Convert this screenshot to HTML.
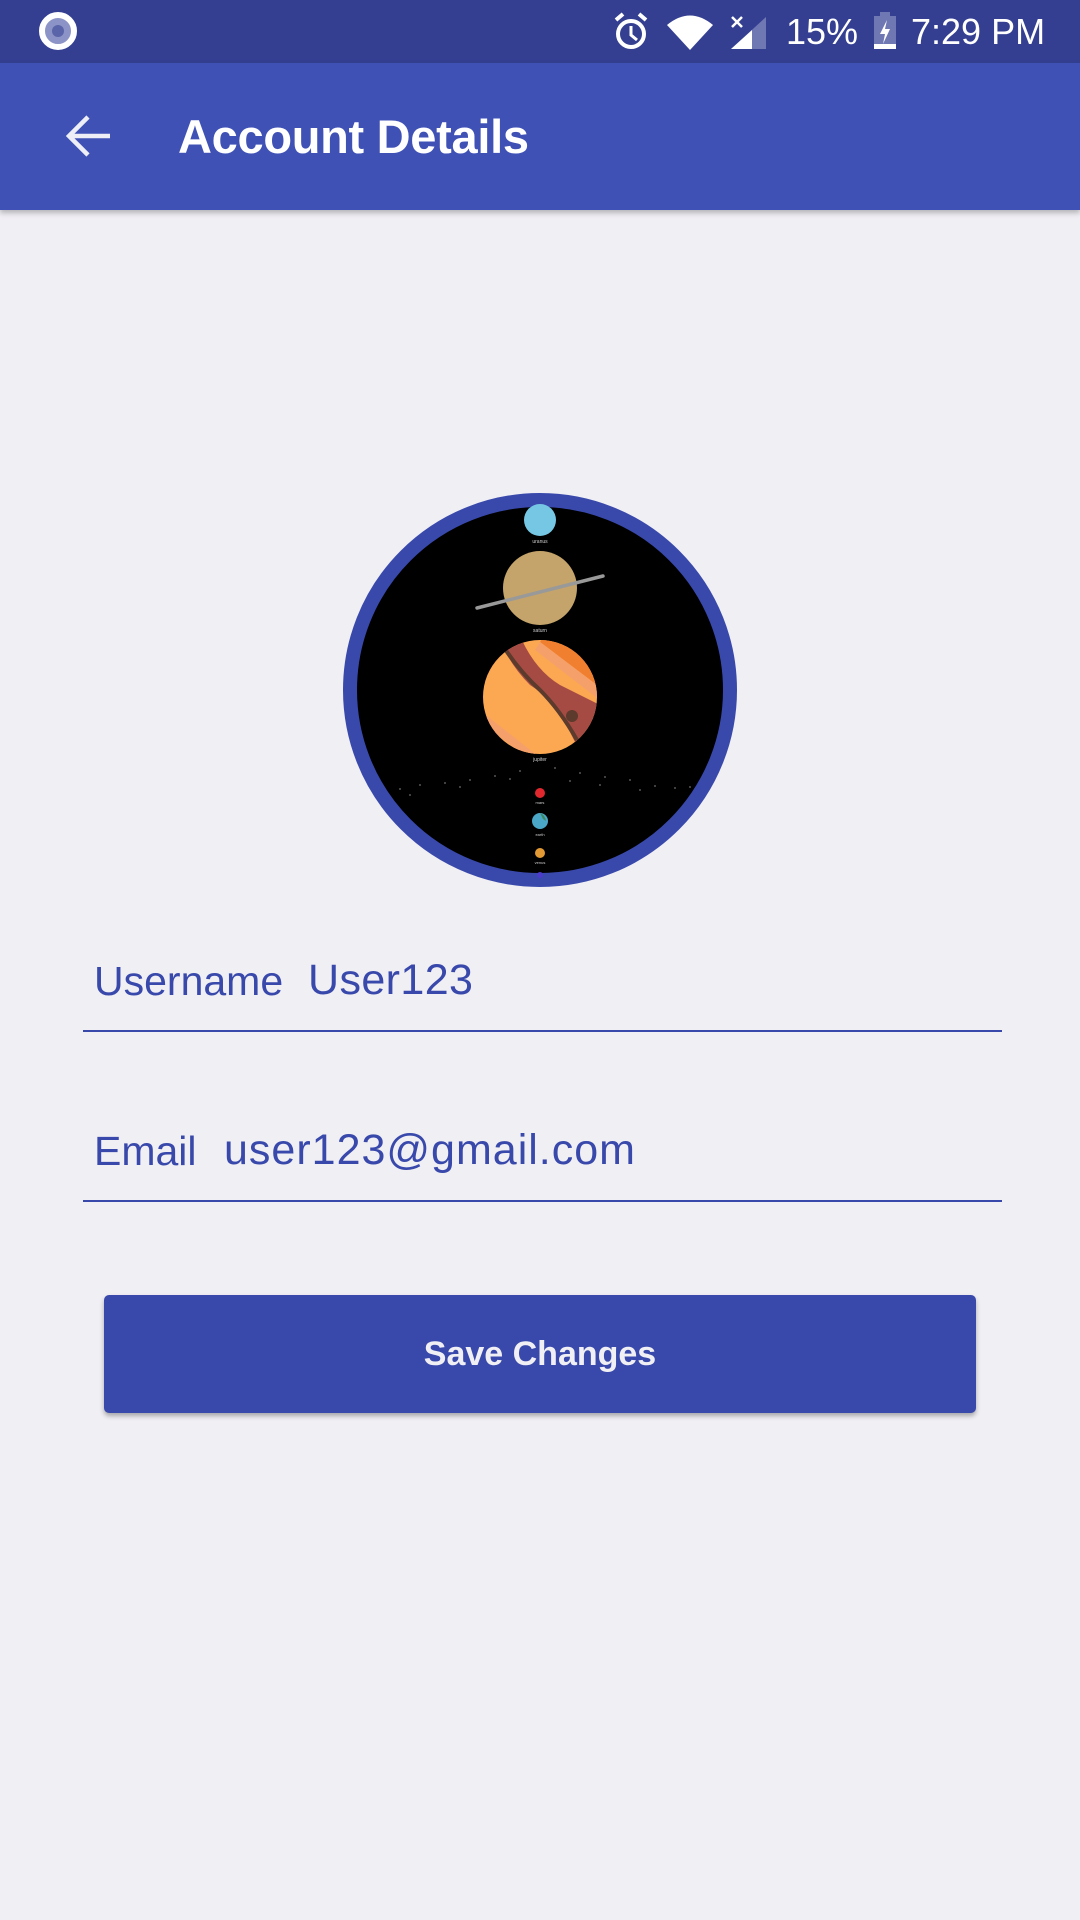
<!DOCTYPE html>
<html><head><meta charset="utf-8"><style>
html,body{margin:0;padding:0}
body{width:1080px;height:1920px;background:#F0EFF4;position:relative;overflow:hidden;font-family:"Liberation Sans",sans-serif}
.sb{position:absolute;left:0;top:0;width:1080px;height:63px;background:#343F91}
.ab{position:absolute;left:0;top:63px;width:1080px;height:147px;background:#3F51B5;box-shadow:0 3px 5px rgba(0,0,0,.25)}
.t{position:absolute;color:#fff;white-space:nowrap}
.lbl{position:absolute;color:#3949AB;font-size:41px;white-space:nowrap;line-height:1}
.line{position:absolute;left:83px;width:919px;height:2px;background:#3949AB}
.btn{position:absolute;left:104px;top:1295px;width:872px;height:118px;background:#3949AB;border-radius:5px;box-shadow:0 3px 5px rgba(0,0,0,.3);color:#F0EFF4;font-weight:bold;font-size:34px;text-align:center;line-height:118px}
</style></head><body>
<div class="sb">
<svg width="1080" height="63" style="position:absolute;left:0;top:0">
<circle cx="58" cy="31" r="16" fill="#8C93C6" stroke="#fff" stroke-width="6"/>
<circle cx="58" cy="31" r="6" fill="#5A64A8"/>
<circle cx="631" cy="34" r="13" fill="none" stroke="#fff" stroke-width="4"/>
<path d="M631 26v9l6 5" stroke="#fff" stroke-width="3" fill="none"/>
<path d="M616 20l7-6M646 20l-7-6" stroke="#fff" stroke-width="4"/>
<path d="M667 25 Q690 6 713 25 L690 50 Z" fill="#fff"/>
<path d="M731 49 L766 17 L766 49 Z" fill="#7078B4"/>
<path d="M731 49 L752 30 L752 49 Z" fill="#fff"/>
<path d="M732 17l10 10M742 17l-10 10" stroke="#fff" stroke-width="2.5"/>
<rect x="874" y="16" width="22" height="33" fill="#7078B4"/>
<rect x="880" y="12" width="10" height="5" fill="#7078B4"/>
<rect x="874" y="44" width="22" height="5" fill="#fff"/>
<path d="M887 20l-7 14h5l-2 10 7-15h-5z" fill="#fff"/>
</svg>
<div class="t" style="left:786px;top:11px;font-size:36px">15%</div>
<div class="t" style="left:911px;top:11px;font-size:36px">7:29 PM</div>
</div>
<div class="ab">
<svg width="60" height="60" style="position:absolute;left:60px;top:43px">
<path d="M50 30H10M28 11L9 30l19 19" stroke="#EDEEF6" stroke-width="4.5" fill="none"/>
</svg>
<div class="t" style="left:178px;top:46px;font-size:47px;font-weight:bold;letter-spacing:-0.3px">Account Details</div>
</div>

<svg width="420" height="420" style="position:absolute;left:330px;top:480px" viewBox="330 480 420 420">
<circle cx="540" cy="690" r="190" fill="#000" stroke="#3949AB" stroke-width="14"/>
<circle cx="540" cy="520" r="16" fill="#76C7E3"/>
<text x="540" y="543" font-size="5" fill="#ccc" text-anchor="middle">uranus</text>
<circle cx="540" cy="588" r="37" fill="#C4A46A"/>
<path d="M477 608 L603 576" stroke="#999" stroke-width="3.5" stroke-linecap="round"/>
<text x="540" y="632" font-size="5" fill="#ccc" text-anchor="middle">saturn</text>
<clipPath id="j"><circle cx="540" cy="697" r="57"/></clipPath>
<g clip-path="url(#j)">
<rect x="480" y="637" width="120" height="120" fill="#FCA852"/>
<path d="M550 630 L610 675 L610 695 L540 642 Z" fill="#F08030"/>
<path d="M540 642 L610 695 L610 708 L535 650 Z" fill="#F5A06A"/>
<path d="M470 718 L545 772 L520 775 L470 735 Z" fill="#F07A30"/>
<path d="M472 704 L548 764 L543 770 L470 714 Z" fill="#F5A06A"/>
<path d="M500 640 L520 636 Q535 670 560 685 L600 705 L590 735 L575 742 Q555 700 530 685 Q510 665 500 640 Z" fill="#A64B44"/>
<path d="M503 646 Q520 672 540 690 Q560 710 577 740" stroke="#5C3A2C" stroke-width="4" fill="none"/>
<circle cx="572" cy="716" r="6" fill="#5C3A2C"/>
</g>
<text x="540" y="761" font-size="5" fill="#ccc" text-anchor="middle">jupiter</text>
<g fill="#555">
<circle cx="400" cy="789" r="1"/><circle cx="420" cy="785" r="1"/><circle cx="445" cy="783" r="1"/><circle cx="470" cy="780" r="1"/><circle cx="495" cy="776" r="1"/><circle cx="520" cy="771" r="1"/><circle cx="555" cy="768" r="1"/><circle cx="580" cy="773" r="1"/><circle cx="605" cy="777" r="1"/><circle cx="630" cy="780" r="1"/><circle cx="655" cy="786" r="1"/><circle cx="675" cy="788" r="1"/><circle cx="690" cy="787" r="1"/><circle cx="410" cy="795" r="1"/><circle cx="460" cy="787" r="1"/><circle cx="600" cy="785" r="1"/><circle cx="640" cy="790" r="1"/><circle cx="510" cy="779" r="1"/><circle cx="570" cy="781" r="1"/>
</g>
<circle cx="540" cy="793" r="5" fill="#E0282E"/>
<text x="540" y="804" font-size="4" fill="#ccc" text-anchor="middle">mars</text>
<circle cx="540" cy="821" r="8" fill="#4BA7C8"/>
<path d="M540 813 q5 2 6 8 l-3 -2 z" fill="#3E8A5E"/>
<text x="540" y="836" font-size="4" fill="#ccc" text-anchor="middle">earth</text>
<circle cx="540" cy="853" r="5" fill="#E39A35"/>
<text x="540" y="864" font-size="4" fill="#ccc" text-anchor="middle">venus</text>
<circle cx="540" cy="875" r="3" fill="#4B3BC8"/>
</svg>

<div class="lbl" style="left:94px;top:961px">Username</div>
<div class="lbl" style="left:308px;top:959px;font-size:43px;letter-spacing:0.4px">User123</div>
<div class="line" style="top:1030px"></div>
<div class="lbl" style="left:94px;top:1131px">Email</div>
<div class="lbl" style="left:224px;top:1129px;font-size:43px;letter-spacing:1px">user123@gmail.com</div>
<div class="line" style="top:1200px"></div>
<div class="btn">Save Changes</div>
</body></html>
